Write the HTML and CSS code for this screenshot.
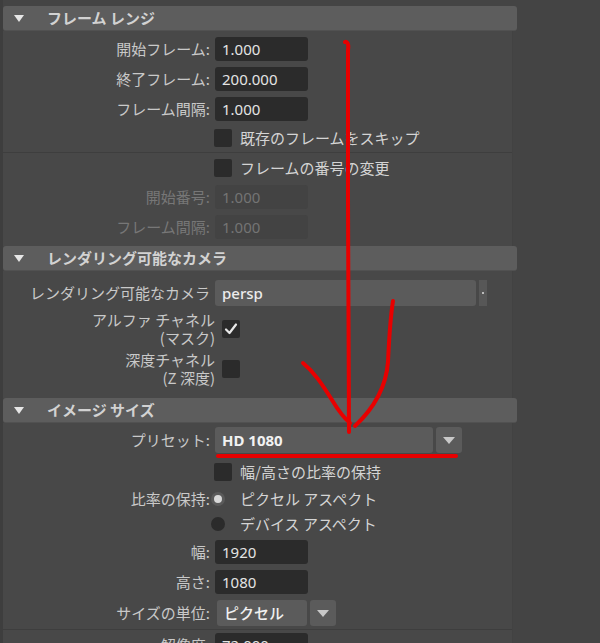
FILE: index.html
```html
<!DOCTYPE html>
<html lang="ja">
<head>
    <meta charset="UTF-8">
    <title>レンダー設定</title>
    <link rel="stylesheet" href="styles.css">
</head>
<body>
<div class="editor">
    <div class="panel">
        <section class="section">
            <div class="header"><span class="tri"></span>フレーム レンジ</div>
            <div class="body body-frames">
                <div class="row"><span class="lbl">開始フレーム:</span><div class="field">1.000</div></div>
                <div class="row"><span class="lbl">終了フレーム:</span><div class="field">200.000</div></div>
                <div class="row"><span class="lbl">フレーム間隔:</span><div class="field">1.000</div></div>
                <div class="row row-check sep"><span class="lbl"></span><div class="check-item"><span class="box"></span>既存のフレームをスキップ</div></div>
                <div class="row row-check"><span class="lbl"></span><div class="check-item"><span class="box"></span>フレームの番号の変更</div></div>
                <div class="row off"><span class="lbl">開始番号:</span><div class="field">1.000</div></div>
                <div class="row off"><span class="lbl">フレーム間隔:</span><div class="field">1.000</div></div>
            </div>
        </section>

        <section class="section">
            <div class="header"><span class="tri"></span>レンダリング可能なカメラ</div>
            <div class="body body-camera">
                <div class="row row-camera">
                    <span class="lbl">レンダリング可能なカメラ</span>
                    <div class="combo">
                        <div class="combo-main wide">persp</div>
                        <div class="combo-tab"><span class="dot"></span></div>
                    </div>
                </div>
                <div class="row row-tall">
                    <span class="lbl">アルファ チャネル<br>(マスク)</span>
                    <span class="box checked">
                        <svg width="18" height="18" viewBox="0 0 18 18"><path d="M4 9.5 L7.5 13 L14 4.5" fill="none" stroke="#e8e8e8" stroke-width="2.2" stroke-linecap="round" stroke-linejoin="round"/></svg>
                    </span>
                </div>
                <div class="row row-tall">
                    <span class="lbl">深度チャネル<br>(Z 深度)</span>
                    <span class="box"></span>
                </div>
            </div>
        </section>

        <section class="section">
            <div class="header"><span class="tri"></span>イメージ サイズ</div>
            <div class="body body-size">
                <div class="row row-preset">
                    <span class="lbl">プリセット:</span>
                    <div class="combo">
                        <div class="combo-main preset">HD 1080</div>
                        <div class="combo-btn"><span class="arrow"></span></div>
                    </div>
                </div>
                <div class="row row-check2"><span class="lbl"></span><div class="check-item"><span class="box"></span>幅/高さの比率の保持</div></div>
                <div class="row row-radio"><span class="lbl">比率の保持:</span><div class="radio-item"><span class="radio on"></span>ピクセル アスペクト</div></div>
                <div class="row row-radio"><span class="lbl"></span><div class="radio-item"><span class="radio"></span>デバイス アスペクト</div></div>
                <div class="row"><span class="lbl">幅:</span><div class="field">1920</div></div>
                <div class="row"><span class="lbl">高さ:</span><div class="field">1080</div></div>
                <div class="row row-unit sep">
                    <span class="lbl">サイズの単位:</span>
                    <div class="combo unit">
                        <div class="combo-main small">ピクセル</div>
                        <div class="combo-btn"><span class="arrow"></span></div>
                    </div>
                </div>
                <div class="row"><span class="lbl">解像度:</span><div class="field">72.000</div></div>
            </div>
        </section>
    </div>

    <!-- 赤いマーク -->
    <svg class="marks" width="600" height="643" viewBox="0 0 600 643">
        <g fill="none" stroke="#e80000" stroke-linecap="round" stroke-linejoin="round">
            <path d="M345 42 C347 41 349 44 348 50 L348 200 L349 432" stroke-width="4"/>
            <path d="M393 301 C390 320 389 340 388 362 C386 388 372 410 355 426" stroke-width="4"/>
            <path d="M303 363 C314 372 322 384 332 400 C338 410 344 418 350 423" stroke-width="4"/>
            <path d="M218 456 L456 456" stroke-width="4"/>
        </g>
    </svg>
</div>
</body>
</html>
```

FILE: styles.css
```css
* {
    margin: 0;
    padding: 0;
    box-sizing: border-box;
}
body {
    background-color: #444;
    font-family: "Noto Sans CJK JP", "Noto Sans", sans-serif;
    font-size: 15px;
    color: #c9c9c9;
    overflow: hidden;
}
.editor {
    position: relative;
    width: 600px;
    height: 643px;
    overflow: hidden;
}
.panel {
    width: 517px;
    padding-left: 3px;
    padding-top: 6px;
    background: linear-gradient(to right, #3e3e3e 3px, transparent 3px);
}
.header {
    height: 25px;
    background-color: #5d5d5d;
    border-radius: 3px;
    border-bottom: 1px solid #515151;
    display: flex;
    align-items: center;
    padding-left: 11px;
    font-weight: bold;
    color: #d2d2d2;
    line-height: 24px;
}
.header .tri {
    width: 0;
    height: 0;
    border-left: 5px solid transparent;
    border-right: 5px solid transparent;
    border-top: 7px solid #e6e6e6;
    margin-right: 23px;
}
.body {
    width: 510px;
    background-color: #484848;
    border-right: 1px solid #424242;
}
.body-frames {
    padding-top: 3px;
    padding-bottom: 4px;
}
.body-camera {
    padding-top: 5px;
    padding-bottom: 10px;
}
.body-size {
    height: 300px;
}
.row {
    display: grid;
    grid-template-columns: 207px auto;
    column-gap: 5px;
    align-items: center;
    height: 30px;
    line-height: 20px;
}
.row .lbl {
    text-align: right;
    white-space: nowrap;
}
.row-check {
    height: 29px;
}
.sep {
    border-bottom: 1px solid #3e3e3e;
}
.field {
    width: 93px;
    height: 24px;
    background-color: #2b2b2b;
    border-radius: 3px;
    padding-left: 7px;
    color: #e4e4e4;
    line-height: 24px;
    font-family: "Noto Sans", sans-serif;
}
.off .lbl {
    color: #777;
}
.off .field {
    background-color: #434343;
    color: #747474;
}
.check-item, .radio-item {
    display: flex;
    align-items: center;
    color: #d4d4d4;
}
.box {
    display: block;
    width: 18px;
    height: 18px;
    background-color: #2b2b2b;
    border-radius: 2px;
    margin-left: -1px;
    margin-right: 8px;
}
.box svg {
    display: block;
}
.row-camera {
    height: 34px;
}
.row-tall {
    grid-template-columns: 212px auto;
    height: 38px;
    line-height: 18px;
}
.row-tall + .row-tall {
    margin-top: 2px;
}
.row-tall .box {
    margin-left: 2px;
}
.combo {
    display: flex;
    gap: 3px;
}
.combo-main {
    height: 26px;
    background-color: #5b5b5b;
    border-radius: 3px;
    padding-left: 7px;
    line-height: 26px;
    color: #ececec;
}
.combo-main.wide {
    width: 261px;
    font-family: "Noto Sans", sans-serif;
    font-weight: 500;
}
.combo-main.preset {
    width: 218px;
    font-family: "Noto Sans", sans-serif;
    font-weight: bold;
    color: #f2f2f2;
}
.combo-main.small {
    width: 90px;
    font-weight: 500;
    color: #f0f0f0;
}
.combo-tab {
    width: 8px;
    height: 26px;
    background-color: #575757;
    display: flex;
    align-items: center;
    justify-content: center;
}
.dot {
    width: 2px;
    height: 2px;
    background-color: #bbb;
}
.combo-btn {
    width: 26px;
    height: 26px;
    background-color: #5b5b5b;
    border-radius: 3px;
    display: flex;
    align-items: center;
    justify-content: center;
}
.arrow {
    width: 0;
    height: 0;
    border-left: 6px solid transparent;
    border-right: 6px solid transparent;
    border-top: 7px solid #c8c8c8;
}
.combo.unit {
    margin-left: 2px;
}
.row-preset {
    height: 34px;
}
.row-check2 {
    height: 29px;
}
.row-radio {
    height: 25px;
}
.row-radio + .row-radio {
    height: 26px;
}
.radio {
    display: block;
    width: 14px;
    height: 14px;
    border-radius: 50%;
    background-color: #2b2b2b;
    margin-left: -4px;
    margin-right: 15px;
}
.radio.on {
    background-color: #d8d8d8;
    border: 3px solid #5a5a5a;
}
.row-unit {
    height: 33px;
}
.marks {
    position: absolute;
    top: 0;
    left: 0;
    pointer-events: none;
}
```
